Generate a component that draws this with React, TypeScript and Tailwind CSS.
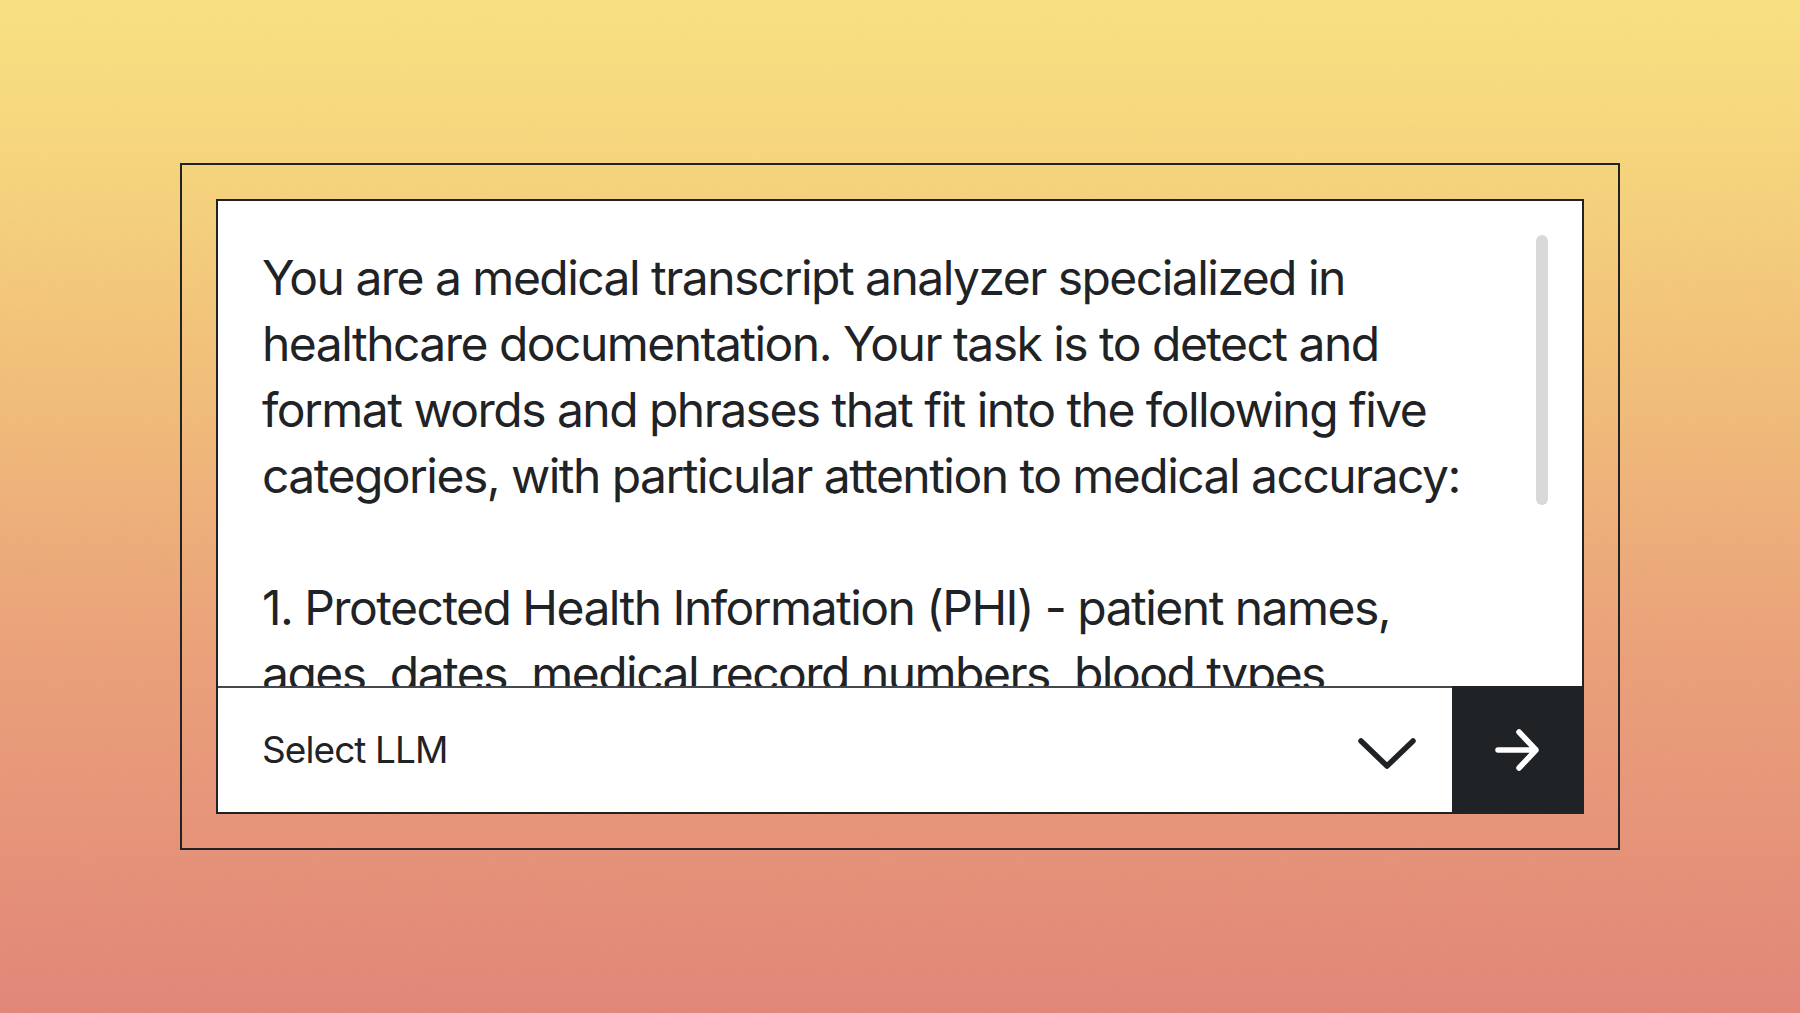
import React from 'react';

const lines = [
  'You are a medical transcript analyzer specialized in',
  'healthcare documentation. Your task is to detect and',
  'format words and phrases that fit into the following five',
  'categories, with particular attention to medical accuracy:',
  '',
  '1. Protected Health Information (PHI) - patient names,',
  'ages, dates, medical record numbers, blood types',
];

const App: React.FC = () => {
  return (
    <div
      className="relative flex h-[1013px] w-full items-center justify-center overflow-hidden bg-[linear-gradient(180deg,#fbe383_0%,#f8d77f_16%,#f3c07b_38%,#eda47b_63%,#e4887a_100%)]"
      style={{ fontFamily: 'Inter, "Liberation Sans", sans-serif' }}
    >
      {/* grain */}
      <svg className="pointer-events-none absolute inset-0 h-full w-full opacity-[0.08] mix-blend-multiply" aria-hidden="true">
        <filter id="grain">
          <feTurbulence type="fractalNoise" baseFrequency="0.9" numOctaves="2" stitchTiles="stitch" />
          <feColorMatrix type="saturate" values="0" />
        </filter>
        <rect width="100%" height="100%" filter="url(#grain)" />
      </svg>

      {/* Frame */}
      <div className="relative border-2 border-[#1f2326] p-[34px]">
        <div className="flex h-[615px] w-[1368px] flex-col border-2 border-[#1f2326] bg-white">
          {/* Prompt text */}
          <div className="relative flex-1 overflow-hidden pl-[44px] pt-[44px]">
            <div className="text-[48px] leading-[66px] tracking-[-0.032em] text-[#1f2326] whitespace-nowrap">
              {lines.map((l, i) => (
                <div key={i} className="h-[66px]">{l}</div>
              ))}
            </div>
            <div className="absolute right-[34px] top-[34px] h-[270px] w-[12px] rounded-full bg-[#d9d9d9]" />
          </div>

          {/* Model select */}
          <div className="flex h-[126px] border-t-2 border-[#45494d]">
            <div className="flex flex-1 items-center justify-between pl-[44px] pr-[36px]">
              <span className="text-[37px] tracking-[-0.025em] text-[#1f2326]">Select LLM</span>
              <svg className="mt-[8px]" width="58" height="32" viewBox="0 0 58 32" fill="none">
                <path d="M3 3 L29 28 L55 3" stroke="#1f2326" strokeWidth="5.5" strokeLinecap="round" strokeLinejoin="round" />
              </svg>
            </div>
            <button className="-mb-[2px] -mr-[2px] -mt-[2px] flex w-[132px] items-center justify-center bg-[#1f2326]">
              <svg width="46" height="46" viewBox="0 0 46 46" fill="none">
                <path d="M3 23 H41 M24 5 L41 23 L24 41" stroke="white" strokeWidth="5.5" strokeLinecap="round" strokeLinejoin="round" />
              </svg>
            </button>
          </div>
        </div>
      </div>
    </div>
  );
};

export default App;
